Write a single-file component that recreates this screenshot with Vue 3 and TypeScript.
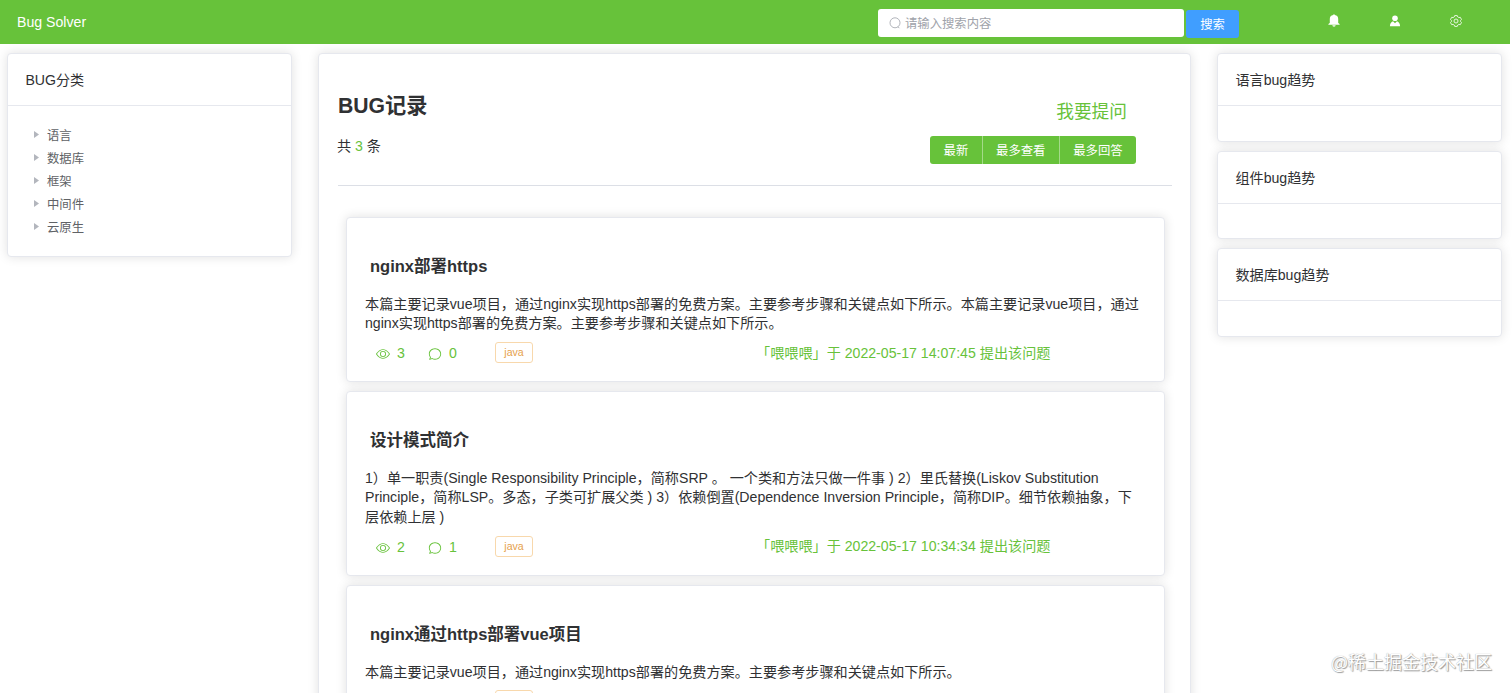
<script setup lang="ts">
interface Question {
  title: string
  lines: string[]
  views: number
  comments: number
  tag: string
  author: string
  time: string
}

const categories: string[] = ['语言', '数据库', '框架', '中间件', '云原生']
const sorts: string[] = ['最新', '最多查看', '最多回答']
const trends: string[] = ['语言bug趋势', '组件bug趋势', '数据库bug趋势']

const questions: Question[] = [
  {
    title: 'nginx部署https',
    lines: [
      '本篇主要记录vue项目，通过nginx实现https部署的免费方案。主要参考步骤和关键点如下所示。本篇主要记录vue项目，通过',
      'nginx实现https部署的免费方案。主要参考步骤和关键点如下所示。',
    ],
    views: 3,
    comments: 0,
    tag: 'java',
    author: '喂喂喂',
    time: '2022-05-17 14:07:45',
  },
  {
    title: '设计模式简介',
    lines: [
      '1）单一职责(Single Responsibility Principle，简称SRP 。 一个类和方法只做一件事 ) 2）里氏替换(Liskov Substitution',
      'Principle，简称LSP。多态，子类可扩展父类 ) 3）依赖倒置(Dependence Inversion Principle，简称DIP。细节依赖抽象，下',
      '层依赖上层 )',
    ],
    views: 2,
    comments: 1,
    tag: 'java',
    author: '喂喂喂',
    time: '2022-05-17 10:34:34',
  },
  {
    title: 'nginx通过https部署vue项目',
    lines: ['本篇主要记录vue项目，通过nginx实现https部署的免费方案。主要参考步骤和关键点如下所示。'],
    views: 1,
    comments: 0,
    tag: 'java',
    author: '喂喂喂',
    time: '2022-05-17 10:12:08',
  },
]
</script>

<template>
  <div class="page">
    <header class="topbar">
      <div class="brand">Bug Solver</div>
      <div class="search">
        <div class="search-input">
          <svg class="search-icon" viewBox="0 0 12 12"><circle cx="6" cy="5.8" r="5" /><path d="M8.9 9.7l1.5 1.5" /></svg>
          <span>请输入搜索内容</span>
        </div>
        <button class="search-btn">搜索</button>
      </div>
      <nav class="actions">
        <svg class="bell" viewBox="0 0 12 13"><path d="M5.2 1a.8.8 0 0 1 1.6 0A4 4 0 0 1 10.2 5v4l1.4 1v.7H.4V10l1.4-1V5A4 4 0 0 1 5.2 1zM4.3 11.3h3.4a1.7 1.4 0 0 1-3.4 0z" /></svg>
        <svg class="user" viewBox="0 0 12 12"><circle cx="6" cy="3.3" r="2.8" /><path d="M.9 11.2c.2-2.8 1.2-4.2 3.1-4.9L6 8.2l2-1.9c1.9.7 2.9 2.1 3.1 4.900z" /></svg>
        <svg class="gear" viewBox="0 0 12 12"><path d="M4.7.6h2.6l.5 1.4 1 .6 1.5-.3 1.2 2.2-1 1.1v.8l1 1.1-1.2 2.2-1.5-.3-1 .6-.5 1.4H4.7l-.5-1.4-1-.6-1.5.3L.5 7.5l1-1.1v-.8l-1-1.1 1.2-2.2 1.5.3 1-.6z" /><circle cx="6" cy="6" r="2" /></svg>
      </nav>
    </header>

    <main class="columns">
      <aside class="card">
        <div class="card-head">BUG分类</div>
        <ul class="tree">
          <li v-for="c in categories" :key="c"><i class="caret"></i>{{ c }}</li>
        </ul>
      </aside>

      <section class="card records">
        <div class="records-head">
          <div>
            <h2>BUG记录</h2>
            <p class="total">共 <span>3</span> 条</p>
          </div>
          <div class="tools">
            <a class="ask">我要提问</a>
            <div class="sorts">
              <button v-for="s in sorts" :key="s">{{ s }}</button>
            </div>
          </div>
        </div>

        <article v-for="q in questions" :key="q.title" class="card question">
          <h3>{{ q.title }}</h3>
          <p class="desc"><span v-for="l in q.lines" :key="l">{{ l }}</span></p>
          <div class="meta">
            <svg class="icon" viewBox="0 0 1024 1024"><path d="M512 160c320 0 512 352 512 352S832 864 512 864 0 512 0 512s192-352 512-352zm0 64c-225.28 0-384.128 208.064-436.8 288 52.608 79.872 211.456 288 436.8 288 225.28 0 384.128-208.064 436.8-288-52.608-79.872-211.456-288-436.8-288zm0 64a224 224 0 1 1 0 448 224 224 0 0 1 0-448zm0 64a160.192 160.192 0 0 0-160 160c0 88.192 71.744 160 160 160s160-71.808 160-160-71.744-160-160-160z" /></svg>
            <span class="count">{{ q.views }}</span>
            <svg class="icon" viewBox="0 0 1024 1024"><path d="m174.72 855.68 130.048-43.392 23.424 11.392C382.4 849.984 444.352 864 512 864c223.744 0 384-159.872 384-352 0-192.832-159.104-352-384-352S128 319.168 128 512a341.12 341.12 0 0 0 69.248 204.288l21.632 28.8-44.16 110.592zm-45.248 82.56A32 32 0 0 1 89.6 896l56.512-141.248A405.12 405.12 0 0 1 64 512C64 299.904 235.648 96 512 96s448 203.904 448 416-173.44 416-448 416c-79.68 0-150.848-17.152-211.712-46.72l-170.88 56.96z" /></svg>
            <span class="count">{{ q.comments }}</span>
            <span class="tag">{{ q.tag }}</span>
            <span class="posted">「{{ q.author }}」于 {{ q.time }} 提出该问题</span>
          </div>
        </article>
      </section>

      <aside class="trends">
        <div v-for="t in trends" :key="t" class="card trend">
          <div class="card-head">{{ t }}</div>
        </div>
      </aside>
    </main>

    <div class="watermark">@稀土掘金技术社区</div>
  </div>
</template>

<style>
body {
  margin: 0;
  overflow: hidden;
}
</style>

<style scoped>
.page {
  position: relative;
  height: 693px;
  overflow: hidden;
  background: #fff;
  color: #303133;
  font-family: "Liberation Sans", "Noto Sans CJK SC", sans-serif;
  font-size: 14.14px;
  white-space: nowrap;
}
.page * {
  box-sizing: border-box;
}
h2, h3, p, ul {
  margin: 0;
  padding: 0;
}
button {
  border: 0;
  padding: 0;
  color: #fff;
  font: inherit;
  font-size: 12.35px;
}
.topbar {
  display: flex;
  width: 1510px;
  height: 44px;
  background: #67c23a;
}
.brand {
  width: 878px;
  padding-left: 17px;
  line-height: 45px;
  color: #fff;
}
.search {
  display: flex;
  gap: 2px;
  width: 450px;
  padding-top: 9px;
}
.search-input {
  display: flex;
  align-items: center;
  width: 306px;
  height: 28px;
  padding-left: 11px;
  gap: 4px;
  border-radius: 3px;
  background: #fff;
  color: #a0a3aa;
  font-size: 12.35px;
}
.search-input span {
  margin-top: -1px;
}
.search-icon {
  width: 12px;
  height: 12px;
  fill: none;
  stroke: #a8abb2;
  stroke-width: 0.9;
}
.search-btn {
  width: 53px;
  height: 28px;
  margin-top: 1px;
  padding-bottom: 1px;
  border-radius: 3px;
  background: #409eff;
}
.actions {
  display: flex;
  gap: 49px;
  padding-top: 14px;
}
.actions svg {
  width: 12px;
  height: 13px;
  fill: #fff;
}
.actions .user {
  height: 14px;
}
.actions .gear {
  height: 14px;
  fill: none;
  stroke: #e5f6dd;
  stroke-width: 1;
}
.columns {
  display: grid;
  grid-template-columns: 285px 873px 285px;
  column-gap: 26px;
  align-items: start;
  padding: 9px 0 0 7px;
}
.card {
  border: 1px solid #e6e8ee;
  border-radius: 4px;
  background: #fff;
  box-shadow: 0 0 11px rgba(0, 0, 0, 0.12);
}
.card-head {
  height: 52px;
  padding-left: 17.4px;
  border-bottom: 1px solid #e6e8ee;
  line-height: 52px;
}
.tree {
  height: 150px;
  padding: 17px 0 0 26px;
  list-style: none;
  color: #606266;
  font-size: 12.35px;
}
.tree li {
  display: flex;
  align-items: center;
  height: 23px;
}
.caret {
  width: 5px;
  height: 7px;
  margin-right: 8px;
  background: #b3b6bd;
  clip-path: polygon(0 0, 100% 50%, 0 100%);
}
.records {
  height: 720px;
  padding: 0 18px 0 18px;
}
.records-head {
  display: flex;
  justify-content: space-between;
  height: 132px;
  margin: 0 0 31px 1px;
  padding-right: 36px;
  border-bottom: 1px solid #dcdfe6;
}
h2 {
  margin-top: 39px;
  font-size: 21.2px;
  line-height: 26px;
}
.total {
  margin: 17px 0 0 -1px;
  line-height: 20px;
}
.total span {
  color: #67c23a;
}
.tools {
  display: flex;
  flex-direction: column;
  align-items: flex-end;
}
.ask {
  margin: 45px 9px 0 0;
  color: #67c23a;
  font-size: 17.7px;
  line-height: 26px;
}
.sorts {
  display: flex;
  margin-top: 11px;
  border-radius: 3px;
  overflow: hidden;
}
.sorts button {
  height: 28px;
  padding: 0 13.4px;
  background: #67c23a;
}
.sorts button + button {
  border-left: 1px solid #a4da89;
}
.question {
  width: 819px;
  margin: 0 0 8.7px 9px;
  padding: 36px 18px 0;
}
h3 {
  padding-left: 5px;
  font-size: 16.5px;
  line-height: 24px;
}
.desc {
  display: flex;
  flex-direction: column;
  margin-top: 17px;
}
.desc span {
  height: 19.4px;
  line-height: 19.4px;
}
.meta {
  display: flex;
  align-items: center;
  height: 47.6px;
  padding: 0 0 9px 11px;
  color: #67c23a;
}
.icon {
  width: 14px;
  height: 14px;
  margin-top: 2px;
  fill: #67c23a;
}
.count {
  width: 30px;
  padding-left: 7px;
  margin-right: 8px;
}
.tag {
  width: 38px;
  height: 21px;
  margin: -1px 0 0 15px;
  border: 1px solid #f8d8ac;
  border-radius: 3px;
  color: #e6a24c;
  font-size: 10.6px;
  line-height: 19px;
  text-align: center;
}
.posted {
  margin: -3px 0 0 223px;
}
.trends {
  display: flex;
  flex-direction: column;
  gap: 9px;
}
.trend {
  height: 88.6px;
}
.watermark {
  position: absolute;
  right: 20px;
  bottom: 19px;
  color: #fff;
  font-family: "Noto Sans CJK SC", sans-serif;
  font-size: 18px;
  line-height: 26px;
  text-shadow: 1px 1px 1px #999, 0 0 1px #999;
}
</style>
